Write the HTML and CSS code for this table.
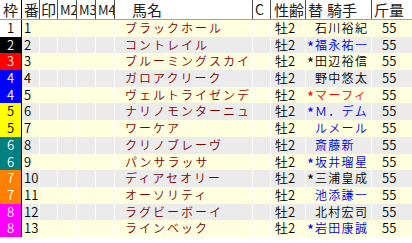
FILE: index.html
```html
<!DOCTYPE html>
<html lang="ja">
<head>
<meta charset="utf-8">
<link rel="stylesheet" href="styles.css">
</head>
<body>
<div class="tbl">
  <div class="row head">
    <div class="c waku-h">枠</div>
    <div class="c num-h">番</div>
    <div class="c mk-h">印</div>
    <div class="c mk-h sm">M2</div>
    <div class="c mk-h sm">M3</div>
    <div class="c mk-h sm">M4</div>
    <div class="c name-h">馬名</div>
    <div class="c c-h">C</div>
    <div class="c age-h">性齢</div>
    <div class="c jk-h">替<span class="gap"></span>騎手</div>
    <div class="c kin-h">斤量</div>
  </div>

  <div class="row odd"><div class="c waku w1">1</div><div class="c num">1</div><div class="c mk"></div><div class="c mk"></div><div class="c mk"></div><div class="c mk"></div><div class="c name">ブラックホール</div><div class="c cc"></div><div class="c age">牡2</div><div class="c jk black"><span class="ast"></span>石川裕紀</div><div class="c kin">55</div></div>
  <div class="row even"><div class="c waku w2">2</div><div class="c num">2</div><div class="c mk"></div><div class="c mk"></div><div class="c mk"></div><div class="c mk"></div><div class="c name">コントレイル</div><div class="c cc"></div><div class="c age">牡2</div><div class="c jk blue"><span class="ast">*</span>福永祐一</div><div class="c kin">55</div></div>
  <div class="row odd"><div class="c waku w3">3</div><div class="c num">3</div><div class="c mk"></div><div class="c mk"></div><div class="c mk"></div><div class="c mk"></div><div class="c name">ブルーミングスカイ</div><div class="c cc"></div><div class="c age">牡2</div><div class="c jk black"><span class="ast">*</span>田辺裕信</div><div class="c kin">55</div></div>
  <div class="row even"><div class="c waku w4">4</div><div class="c num">4</div><div class="c mk"></div><div class="c mk"></div><div class="c mk"></div><div class="c mk"></div><div class="c name">ガロアクリーク</div><div class="c cc"></div><div class="c age">牡2</div><div class="c jk black"><span class="ast"></span>野中悠太</div><div class="c kin">55</div></div>
  <div class="row odd"><div class="c waku w4">4</div><div class="c num">5</div><div class="c mk"></div><div class="c mk"></div><div class="c mk"></div><div class="c mk"></div><div class="c name">ヴェルトライゼンデ</div><div class="c cc"></div><div class="c age">牡2</div><div class="c jk red"><span class="ast">*</span>マーフィ</div><div class="c kin">55</div></div>
  <div class="row even"><div class="c waku w5">5</div><div class="c num">6</div><div class="c mk"></div><div class="c mk"></div><div class="c mk"></div><div class="c mk"></div><div class="c name">ナリノモンターニュ</div><div class="c cc"></div><div class="c age">牡2</div><div class="c jk blue"><span class="ast">*</span>Ｍ．デム</div><div class="c kin">55</div></div>
  <div class="row odd"><div class="c waku w5">5</div><div class="c num">7</div><div class="c mk"></div><div class="c mk"></div><div class="c mk"></div><div class="c mk"></div><div class="c name">ワーケア</div><div class="c cc"></div><div class="c age">牡2</div><div class="c jk blue"><span class="ast"></span>ルメール</div><div class="c kin">55</div></div>
  <div class="row even"><div class="c waku w6">6</div><div class="c num">8</div><div class="c mk"></div><div class="c mk"></div><div class="c mk"></div><div class="c mk"></div><div class="c name">クリノブレーヴ</div><div class="c cc"></div><div class="c age">牡2</div><div class="c jk blue"><span class="ast"></span>斎藤新</div><div class="c kin">55</div></div>
  <div class="row odd"><div class="c waku w6">6</div><div class="c num">9</div><div class="c mk"></div><div class="c mk"></div><div class="c mk"></div><div class="c mk"></div><div class="c name">パンサラッサ</div><div class="c cc"></div><div class="c age">牡2</div><div class="c jk blue"><span class="ast">*</span>坂井瑠星</div><div class="c kin">55</div></div>
  <div class="row even"><div class="c waku w7">7</div><div class="c num">10</div><div class="c mk"></div><div class="c mk"></div><div class="c mk"></div><div class="c mk"></div><div class="c name">ディアセオリー</div><div class="c cc"></div><div class="c age">牡2</div><div class="c jk black"><span class="ast">*</span>三浦皇成</div><div class="c kin">55</div></div>
  <div class="row odd"><div class="c waku w7">7</div><div class="c num">11</div><div class="c mk"></div><div class="c mk"></div><div class="c mk"></div><div class="c mk"></div><div class="c name">オーソリティ</div><div class="c cc"></div><div class="c age">牡2</div><div class="c jk blue"><span class="ast"></span>池添謙一</div><div class="c kin">55</div></div>
  <div class="row even"><div class="c waku w8">8</div><div class="c num">12</div><div class="c mk"></div><div class="c mk"></div><div class="c mk"></div><div class="c mk"></div><div class="c name">ラグビーボーイ</div><div class="c cc"></div><div class="c age">牡2</div><div class="c jk black"><span class="ast"></span>北村宏司</div><div class="c kin">55</div></div>
  <div class="row odd"><div class="c waku w8">8</div><div class="c num">13</div><div class="c mk"></div><div class="c mk"></div><div class="c mk"></div><div class="c mk"></div><div class="c name">ラインベック</div><div class="c cc"></div><div class="c age">牡2</div><div class="c jk blue"><span class="ast">*</span>岩田康誠</div><div class="c kin">55</div></div>
</div>
</body>
</html>
```

FILE: styles.css
```css
html, body {
  margin: 0;
  padding: 0;
  background: #ffffff;
}
body {
  width: 412px;
  height: 243px;
  overflow: hidden;
  font-family: "Noto Sans CJK JP", "Noto Sans", sans-serif;
  font-weight: 350;
  color: #000;
}
.tbl {
  display: flex;
  flex-direction: column;
}
.row {
  display: grid;
  grid-template-columns: 22px 18px 18px 19px 19px 19px 138px 18px 35px 66px 40px;
  height: 16.7px;
}
.c {
  box-sizing: border-box;
  white-space: nowrap;
  overflow: hidden;
  font-size: 12px;
  line-height: 16.7px;
  border-right: 1px solid #ffffff;
}
.odd .c { background: #ffffe0; }
.even .c { background: #ebebeb; }

/* header */
.head {
  height: 20px;
  background: #fff;
  border-bottom: 1px solid #a0a0a0;
  box-sizing: border-box;
}
.head .c {
  font-size: 15px;
  font-weight: 400;
  line-height: 19px;
  border-right: 1px solid #505050;
  background: #fff;
  color: #202020;
}
.head .c.kin-h { border-right: none; }
.waku-h { text-align: center; border-right-color: #000 !important; }
.num-h { padding-left: 2px; }
.mk-h { padding-left: 1px; }
.mk-h.sm { font-size: 13px !important; padding-left: 2px; }
.name-h { padding-left: 17px; }
.c-h { padding-left: 2px; font-size: 14px !important; }
.age-h { padding-left: 3px; }
.jk-h { padding-left: 2px; }
.jk-h .gap { display: inline-block; width: 4px; }
.kin-h { padding-left: 2px; }

/* data */
.waku {
  text-align: center;
  border-right: 1px solid #000 !important;
  font-size: 13px;
}
.odd .c.w1, .even .c.w1 { background: #ffffff; color: #000; }
.odd .c.w2, .even .c.w2 { background: #000000; color: #fff; }
.odd .c.w3, .even .c.w3 { background: #ff0000; color: #ffe0e0; }
.odd .c.w4, .even .c.w4 { background: #0000ff; color: #fff; }
.odd .c.w5, .even .c.w5 { background: #ffff00; color: #000; }
.odd .c.w6, .even .c.w6 { background: #008080; color: #fff; }
.odd .c.w7, .even .c.w7 { background: #ff8000; color: #fff; }
.odd .c.w8, .even .c.w8 { background: #ff00ff; color: #fff; }

.num {
  padding-left: 2px;
  font-size: 13px;
}
.name {
  padding-left: 10px;
  color: #800000;
  letter-spacing: 2px;
}
.age {
  padding-left: 4px;
  font-size: 13px;
}
.jk {
  padding-left: 1px;
  letter-spacing: 1.3px;
  font-size: 12px;
}
.jk .ast {
  display: inline-block;
  width: 8px;
  font-size: 15px;
  font-weight: 400;
  letter-spacing: 0;
  vertical-align: -3px;
}
.jk.black { color: #000; }
.jk.blue { color: #0000e0; }
.jk.red { color: #ff0000; }
.kin {
  padding-left: 10px;
  border-right: none;
  font-size: 13px;
}
```
